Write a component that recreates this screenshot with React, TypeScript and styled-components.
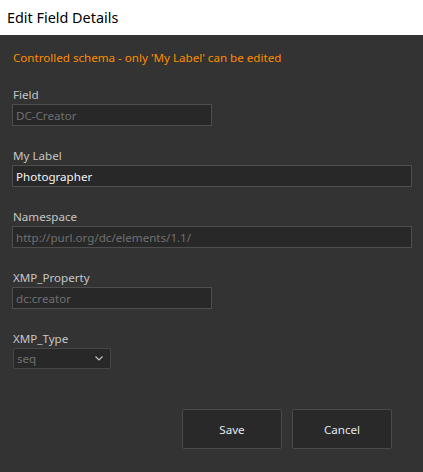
import React from "react";
import styled, { createGlobalStyle } from "styled-components";

const GlobalStyle = createGlobalStyle`
  html, body {
    margin: 0;
    padding: 0;
    background: #333333;
  }
  * {
    box-sizing: border-box;
  }
`;

const Window = styled.div`
  width: 423px;
  height: 472px;
  display: flex;
  flex-direction: column;
  font-family: "Noto Sans", "Open Sans", sans-serif;
`;

const TitleBar = styled.div`
  height: 35px;
  flex: none;
  background: #ffffff;
  color: #000000;
  font-size: 14.4px;
  display: flex;
  align-items: center;
  padding: 0 0 1px 7px;
`;

const Body = styled.div`
  flex: 1;
  background: #333333;
  padding: 15px 11px 0 12px;
  display: flex;
  flex-direction: column;
`;

const Notice = styled.div`
  color: #ff8c00;
  font-size: 11.6px;
  line-height: 16px;
  padding-left: 1px;
  margin-bottom: 20px;
`;

const Group = styled.div`
  display: flex;
  flex-direction: column;
  margin-bottom: 21px;
`;

const Label = styled.label`
  color: #c6c6c6;
  font-size: 11.6px;
  line-height: 16px;
  padding-left: 1px;
  margin-top: 1px;
  margin-bottom: 1px;
`;

const Input = styled.input<{ $wide?: boolean }>`
  width: ${(p) => (p.$wide ? "400px" : "200px")};
  height: 22px;
  background: #282828;
  border: 1px solid #4e4e4e;
  color: ${(p) => (p.disabled ? "#707070" : "#f4f4f4")};
  font-family: inherit;
  font-size: 11.6px;
  padding: 0 3px;
  outline: none;
  margin: 0;
`;

const SelectBox = styled.div`
  width: 98px;
  height: 21px;
  margin-left: 1px;
  background: #282828;
  border: 1px solid #464646;
  border-radius: 2px;
  color: #707070;
  font-size: 11.6px;
  display: flex;
  align-items: center;
  justify-content: space-between;
  padding: 0 7px 0 3px;
`;

const Footer = styled.div`
  display: flex;
  justify-content: flex-end;
  gap: 10px;
  padding-right: 20px;
  margin-top: 19px;
`;

const Button = styled.button`
  width: 100px;
  height: 40px;
  background: #292929;
  border: 1px solid #4a4a4a;
  border-radius: 2px;
  color: #e4e8ee;
  font-family: inherit;
  font-size: 11.6px;
  cursor: pointer;
`;

export default function App() {
  return (
    <Window>
      <GlobalStyle />
      <TitleBar>Edit Field Details</TitleBar>
      <Body>
        <Notice>Controlled schema - only 'My Label' can be edited</Notice>

        <Group>
          <Label>Field</Label>
          <Input disabled value="DC-Creator" readOnly />
        </Group>

        <Group>
          <Label>My Label</Label>
          <Input $wide defaultValue="Photographer" />
        </Group>

        <Group>
          <Label>Namespace</Label>
          <Input $wide disabled value="http://purl.org/dc/elements/1.1/" readOnly />
        </Group>

        <Group>
          <Label>XMP_Property</Label>
          <Input disabled value="dc:creator" readOnly />
        </Group>

        <Group>
          <Label>XMP_Type</Label>
          <SelectBox>
            <span>seq</span>
            <svg width="8" height="5" viewBox="0 0 8 5">
              <path d="M0.5 0.5 L4 4 L7.5 0.5" fill="none" stroke="#c0c0c0" strokeWidth="1.2" />
            </svg>
          </SelectBox>
        </Group>

        <Footer>
          <Button>Save</Button>
          <Button>Cancel</Button>
        </Footer>
      </Body>
    </Window>
  );
}
